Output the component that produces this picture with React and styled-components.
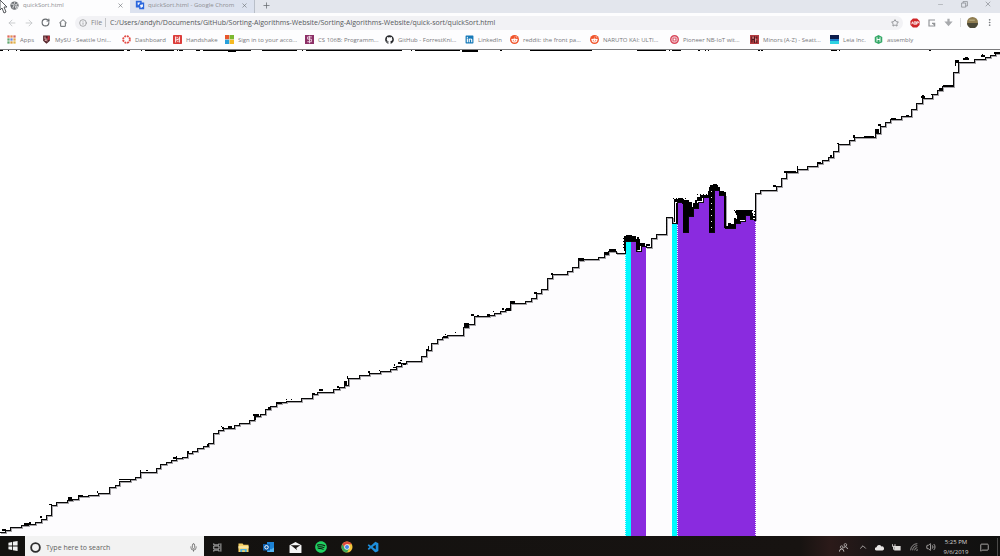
import React from "react";
import styled, { createGlobalStyle } from "styled-components";
import { ArrowLeft, ArrowRight, RotateCw, Info, Star, X, Plus, Minus, Mic, ChevronUp, Volume2, MessageSquare, EllipsisVertical } from "lucide-react";
import { FaGithub, FaLinkedin, FaRedditAlien, FaSpotify } from "react-icons/fa";
import { VscVscode } from "react-icons/vsc";

const GlobalStyle = createGlobalStyle`
  *, *::before, *::after { box-sizing: border-box; }
  body { margin: 0; background: #fff; font-family: "Open Sans", "Noto Sans", sans-serif; overflow: hidden; }
  button, input { font: inherit; color: inherit; border: 0; background: none; padding: 0; margin: 0; outline: none; }
  svg { display: block; flex: none; }
`;

const Screen = styled.div`
  display: flex;
  flex-direction: column;
  height: 100vh;
`;

const Pointer = styled.svg`
  position: absolute;
  left: 0;
  top: 0;
`;

/* Browser window */

const TabStrip = styled.div`
  display: flex;
  height: 13px;
  background: #e3e6ed;
`;

const Tab = styled.div`
  display: flex;
  align-items: center;
  gap: ${(p) => (p.$active ? 4 : 3)}px;
  width: ${(p) => (p.$active ? 131 : 124)}px;
  height: 13px;
  padding: 0 6px 3px ${(p) => (p.$active ? 10 : 4)}px;
  background: ${(p) => (p.$active ? "#fdfdfe" : "#dce2ef")};
  border-right: 1px solid ${(p) => (p.$active ? "#dce2ef" : "#b9bfc9")};
  font-size: 6px;
  color: #8e8f93;
`;

const TabTitle = styled.button`
  flex: 1;
  min-width: 0;
  height: 10px;
  line-height: 10px;
  white-space: nowrap;
  text-align: left;
`;

const IconButton = styled.button`
  display: flex;
  align-items: center;
  justify-content: center;
  width: ${(p) => p.$w || 17}px;
  height: ${(p) => p.$h || 19}px;
  color: ${(p) => p.$color || "#666a6e"};
`;

const WindowControls = styled.div`
  display: flex;
  margin-left: auto;
`;

const Toolbar = styled.div`
  display: flex;
  align-items: center;
  height: 19px;
  padding: 0 2px 0 3px;
  background: #fdfdfe;
`;

const AddressBar = styled.label`
  display: flex;
  align-items: center;
  flex: 1;
  height: 14px;
  margin: 0 3px 0 4px;
  padding-left: 4px;
  border-radius: 7px;
  background: #f2f2f5;
  font-size: 7px;
  color: #85878a;
`;

const Scheme = styled.span`
  margin-left: 4px;
  padding-right: 3px;
  border-right: 1px solid #c3c4c7;
  line-height: 9px;
`;

const Url = styled.input`
  flex: 1;
  min-width: 0;
  height: 14px;
  margin-left: 4px;
  color: #55585b;
`;

const Divider = styled.span`
  width: 1px;
  height: ${(p) => p.$h || 9}px;
  margin: 0 ${(p) => p.$gap || 3}px;
  background: ${(p) => p.$color || "#dadbdd"};
`;

const Bookmarks = styled.nav`
  display: flex;
  align-items: center;
  height: 18px;
  padding: 0 0 2px 7px;
  background: #fdfdfe;
  border-bottom: 1px solid #7b7b7d;
`;

const Bookmark = styled.a`
  display: flex;
  align-items: center;
  gap: 4px;
  flex: none;
  width: ${(p) => p.$w}px;
  font-size: 6px;
  line-height: 10px;
  white-space: nowrap;
  text-decoration: none;
  color: #77787b;
`;

/* Sorting chart */

const Chart = styled.svg`
  flex: 1;
  width: 100%;
  min-height: 0;
  background: #fff;
`;

/* Windows taskbar */

const Taskbar = styled.footer`
  display: flex;
  align-items: center;
  height: 20px;
  flex: none;
  background: linear-gradient(90deg, #12110f 0%, #171311 80%, #2b1a19 83%, #181516 88%, #10100f 100%);
  color: #d6d3d2;
`;

const Search = styled.label`
  display: flex;
  align-items: center;
  gap: 5px;
  width: 179px;
  height: 20px;
  padding: 2px 6px 0 5px;
  background: #f2f2f2;
  color: #5f5f5f;
  font-size: 7px;
`;

const SearchInput = styled.input`
  flex: 1;
  min-width: 0;
  height: 16px;
  &::placeholder { color: #5f5f5f; opacity: 1; }
`;

const Apps = styled.div`
  display: grid;
  grid-template-columns: repeat(7, 26px);
  padding-top: 2px;
`;

const Tray = styled.div`
  display: flex;
  align-items: center;
  margin-left: auto;
  padding-top: 2px;
`;

const Clock = styled.time`
  width: 34px;
  text-align: center;
  font-size: 6px;
  line-height: 10px;
`;

const Glyph = ({ size = 9, children }) => (
  <svg width={size} height={size} viewBox="0 0 24 24" fill="none">{children}</svg>
);

const Globe = () => (
  <Glyph>
    <circle cx="12" cy="12" r="11" fill="#6c6f73" />
    <path d="M3 8l6 1 2 4-3 2v5M13 3l-2 4 4 3 6-3M14 14l5-1 1 4-4 3z" stroke="#e6e7e9" strokeWidth="2.5" />
  </Glyph>
);
const BlueMark = () => (
  <Glyph size={10}>
    <path d="M2 2h14v4h6v16H10v-4H2z" fill="#2a66dd" />
    <path d="M6 6h7l-6 7zM12 12l7-2v6l-5 3z" fill="#f6f9ff" />
  </Glyph>
);
const AppsGrid = () => (
  <Glyph>
    {["#e26858", "#e58b50", "#d6635c", "#63a372", "#6b87d8", "#e0a44a", "#5fa66d", "#db9c3f", "#e0b44a"].map((c, i) => (
      <rect key={i} x={1 + (i % 3) * 8} y={1 + Math.floor(i / 3) * 8} width="6" height="6" fill={c} />
    ))}
  </Glyph>
);
const SeattleU = () => (
  <Glyph>
    <path d="M3 1h18v14l-9 8-9-8z" fill="#54242b" />
    <path d="M8 4v7h7M7 14l8 2" stroke="#e7b3b3" strokeWidth="2.5" />
    <path d="M15 3h5v10h-5z" fill="#c32f3d" />
  </Glyph>
);
const Canvas = () => (
  <Glyph>
    <circle cx="12" cy="12" r="9" stroke="#e24b45" strokeWidth="5" strokeDasharray="5 2.07" />
  </Glyph>
);
const Handshake = () => (
  <Glyph>
    <rect width="24" height="24" rx="2" fill="#dc3c3a" />
    <path d="M7 4v16M17 4v16M7 14l10-4M11 5v4M13 15v4" stroke="#fff" strokeWidth="2.5" />
  </Glyph>
);
const Microsoft = () => (
  <Glyph>
    <path d="M0 0h11.500v11.500H0z" fill="#e8562b" /><path d="M12.500 0H24v11.500H12.500z" fill="#7cb82f" />
    <path d="M0 12.500h11.500V24H0z" fill="#27a0dc" /><path d="M12.500 12.500H24V24H12.500z" fill="#f5b921" />
  </Glyph>
);
const Course = () => (
  <Glyph>
    <rect width="24" height="24" fill="#8c2f66" />
    <path d="M18 5H7v6h10v7H6M12 2v20" stroke="#f0d6e5" strokeWidth="2.5" />
  </Glyph>
);
const RedditDisc = styled.span`
  display: grid;
  place-items: center;
  flex: none;
  width: 9px;
  height: 9px;
  border-radius: 50%;
  background: #f0532a;
  color: #fff;
`;
const Reddit = () => <RedditDisc><FaRedditAlien size={7} /></RedditDisc>;
const Pioneer = () => (
  <Glyph>
    <circle cx="12" cy="12" r="10" stroke="#d8485b" strokeWidth="4" />
    <path d="M8 8h8v8H8z" stroke="#d8485b" strokeWidth="3" />
  </Glyph>
);
const Minors = () => (
  <Glyph>
    <rect width="24" height="24" fill="#b23a3f" />
    <path d="M5 4v16M5 12h6M12 3v18M18 4v6M18 14v7" stroke="#4d1c20" strokeWidth="3" />
    <path d="M8 5v5M15 9v9" stroke="#f0c3c3" strokeWidth="2" />
  </Glyph>
);
const Leia = () => (
  <Glyph>
    <path d="M0 0h24v12H0z" fill="#0c1c4c" /><path d="M0 11h24v6H0z" fill="#187dcc" /><path d="M0 16h24v8H0z" fill="#2ed2e2" />
  </Glyph>
);
const Assembly = () => (
  <Glyph>
    <path d="M12 0l10 5v14l-10 5-10-5V5z" fill="#35a968" />
    <path d="M8 6v12M16 6v12M8 12h8" stroke="#fff" strokeWidth="2.5" />
  </Glyph>
);

const bookmarks = [
  ["Apps", 35, <AppsGrid />],
  ["MySU - Seattle Uni...", 80, <SeattleU />],
  ["Dashboard", 51, <Canvas />],
  ["Handshake", 52, <Handshake />],
  ["Sign in to your acco...", 80, <Microsoft />],
  ["CS 106B: Programm...", 80, <Course />],
  ["GitHub - ForrestKni...", 80, <FaGithub size={9} color="#26282b" />],
  ["LinkedIn", 45, <FaLinkedin size={9} color="#1579b8" />],
  ["reddit: the front pa...", 80, <Reddit />],
  ["NARUTO KAI: ULTI...", 80, <Reddit />],
  ["Pioneer NB-IoT wit...", 80, <Pioneer />],
  ["Minors (A-Z) - Seatt...", 80, <Minors />],
  ["Leia Inc.", 44, <Leia />],
  ["assembly", 50, <Assembly />],
];

/* Each pair is the left edge of a bar and the height its top reaches. */
const bars = [
  [0, 532], [5, 530], [10, 527], [21, 525], [28, 524], [35, 522], [41, 519], [46, 515], [51, 505], [56, 502], [67, 500], [72, 499], [78, 496],
  [88, 495], [98, 493], [109, 487], [115, 485], [119, 481], [130, 479], [135, 477], [140, 472], [156, 468], [160, 464], [166, 462],
  [171, 460], [176, 458], [182, 457], [187, 453], [192, 451], [197, 448], [203, 446], [208, 443], [213, 433], [218, 430], [223, 428],
  [234, 425], [239, 423], [249, 420], [254, 416], [260, 414], [265, 409], [270, 406], [276, 403], [281, 402], [286, 401], [301, 398],
  [312, 394], [317, 392], [333, 389], [339, 387], [344, 385], [348, 378], [359, 375], [369, 373], [380, 371], [390, 369], [396, 366],
  [401, 363], [406, 361], [421, 356], [426, 350], [431, 343], [437, 339], [442, 337], [447, 335], [463, 327], [468, 324], [474, 316],
  [489, 315], [494, 313], [500, 311], [505, 309], [510, 303], [525, 301], [531, 298], [536, 293], [541, 289], [547, 278], [552, 274],
  [567, 271], [572, 267], [578, 260], [583, 259], [598, 257], [604, 254], [608, 251], [616, 253], [625, 241], [631, 241], [636, 251],
  [641, 246], [646, 247], [651, 238], [656, 234], [666, 217], [672, 223], [677, 202], [683, 232], [688, 216], [693, 208], [698, 202],
  [703, 197], [709, 232], [714, 190], [719, 195], [725, 228], [735, 223], [740, 221], [745, 215], [750, 219], [755, 193], [760, 190],
  [776, 186], [781, 178], [786, 172], [797, 169], [807, 166], [817, 163], [822, 160], [828, 157], [833, 151], [838, 144], [849, 140],
  [854, 137], [875, 133], [880, 126], [885, 122], [890, 119], [901, 116], [911, 109], [916, 103], [922, 98], [932, 94], [937, 90],
  [942, 86], [953, 72], [958, 62], [974, 59], [985, 57], [990, 55], [995, 53],
];

const stairs = bars.map(([x, y], i) => (i ? `H${x}V${y}` : `M${x} ${y}`)).join("") + "H1000";

/* Leftover pixels around the bar tops: x, y, width, height. */
const residue = [
  [2, 529, 4, 2], [24, 523, 6, 2], [29, 522, 2, 2], [40, 516, 2, 2], [49, 504, 3, 1], [68, 497, 4, 3], [78, 495, 5, 2], [119, 479, 11, 1],
  [97, 491, 1, 2], [140, 470, 1, 2], [146, 470, 2, 1], [173, 457, 4, 2], [176, 456, 1, 3], [187, 451, 2, 2], [207, 444, 2, 2], [222, 427, 2, 2],
  [228, 426, 4, 2], [221, 426, 1, 1], [253, 414, 6, 2], [254, 417, 2, 3], [268, 407, 2, 2], [276, 402, 5, 2], [286, 399, 1, 1], [291, 399, 1, 1],
  [319, 389, 4, 2], [312, 393, 3, 2], [337, 386, 2, 2], [344, 381, 3, 4], [347, 376, 1, 3], [368, 371, 2, 2], [379, 370, 1, 1],
  [393, 367, 3, 1], [394, 364, 1, 2], [398, 362, 3, 2], [400, 360, 2, 1], [403, 363, 3, 2], [426, 349, 3, 2], [428, 346, 1, 3], [443, 336, 4, 2],
  [445, 334, 1, 1], [455, 332, 1, 1], [464, 323, 5, 4], [471, 314, 3, 2], [477, 315, 2, 1], [487, 314, 3, 2], [493, 311, 1, 1], [502, 308, 2, 2],
  [506, 308, 5, 3], [510, 301, 5, 3], [534, 292, 3, 2], [551, 273, 2, 2], [578, 258, 6, 2], [604, 252, 5, 2], [609, 249, 7, 2],
  [624, 236, 12, 5], [626, 235, 6, 2], [637, 237, 2, 2], [624, 240, 1, 11], [636, 239, 4, 11], [640, 243, 5, 3], [646, 244, 4, 2],
  [674, 199, 10, 3], [678, 198, 4, 2], [674, 200, 1, 22], [676, 203, 1, 20], [682, 200, 2, 4], [683, 200, 5, 32], [688, 202, 4, 14],
  [686, 200, 3, 5], [692, 207, 1, 9], [693, 203, 5, 5], [695, 200, 2, 3], [697, 197, 5, 4], [700, 195, 8, 3], [708, 191, 1, 6],
  [709, 187, 5, 45], [710, 185, 8, 5], [713, 184, 4, 2], [718, 187, 2, 3], [719, 191, 5, 4], [724, 192, 2, 36], [725, 226, 9, 2],
  [728, 223, 3, 4], [731, 224, 3, 2], [734, 218, 2, 10], [736, 210, 16, 5], [735, 211, 5, 2], [737, 214, 8, 6], [736, 219, 4, 4],
  [750, 213, 3, 6], [753, 216, 2, 2], [755, 193, 1, 28], [773, 185, 3, 2], [784, 171, 12, 2], [797, 166, 1, 4], [817, 162, 4, 2],
  [830, 155, 2, 2], [837, 143, 2, 1], [853, 135, 2, 3], [864, 136, 10, 2], [875, 129, 4, 4], [878, 124, 3, 2], [891, 118, 5, 2],
  [906, 115, 3, 1], [921, 96, 4, 2], [922, 95, 2, 1], [931, 94, 2, 1], [939, 88, 4, 2], [943, 85, 10, 2], [955, 60, 4, 3], [955, 63, 1, 3],
  [963, 58, 6, 2], [965, 57, 3, 2], [981, 55, 4, 2], [982, 54, 1, 1], [994, 52, 6, 2],
  [0, 50, 3, 1], [8, 50, 1, 1], [16, 50, 1, 1], [20, 50, 104, 1], [127, 50, 3, 1], [141, 50, 1, 1], [145, 50, 29, 1], [177, 50, 1, 1],
  [179, 50, 4, 1], [196, 50, 4, 1], [203, 50, 48, 1], [228, 50, 8, 2], [262, 50, 35, 1], [302, 50, 1, 1], [306, 50, 96, 1], [411, 50, 1, 1],
  [415, 50, 45, 1], [462, 50, 16, 2], [500, 50, 2, 1], [530, 50, 62, 1], [637, 50, 29, 1], [669, 50, 1, 1], [672, 50, 9, 1], [698, 50, 2, 1],
  [705, 50, 1, 1], [708, 50, 1, 1], [758, 50, 2, 1], [761, 50, 2, 1], [831, 50, 6, 1], [839, 50, 1, 1], [929, 50, 2, 1],
];

const dottedEdges = [[625, 241], [677, 223], [755, 221]];

function SortChart() {
  return (
    <Chart viewBox="0 50 1000 486" preserveAspectRatio="none" shapeRendering="crispEdges" role="img" aria-label="Quick sort bars">
      <path d={`${stairs}V536H0Z`} fill="#fdfcfe" />
      <path d={stairs} fill="none" stroke="#a5a3a7" transform="translate(1 1)" />
      <path d="M631 536V241H636V251H641V246H646V536Z" fill="#8a2bdf" />
      <path d="M677 536V202H683V232H688V216H693V208H698V202H703V197H709V232H714V190H719V195H725V228H735V223H740V221H745V215H750V219H755V536Z" fill="#8a2bdf" />
      <path d="M625 241h6v295h-6zM672 223h5v313h-5z" fill="#00f9ff" />
      {dottedEdges.map(([x, y]) => (
        <path key={x} d={`M${x}.5 ${y}V536`} stroke={x === 755 ? "#8a2bdf" : "#eef4ff"} strokeDasharray="1 1" />
      ))}
      <path d={stairs} fill="none" stroke="#080808" />
      <path d={residue.map(([x, y, w, h]) => `M${x} ${y}h${w}v${h}h${-w}z`).join("")} fill="#000" />
      <path d="M697 194.500H709M673 198.500H686M623 237.500V250M734 210.500H754M754.500 211V221M666.500 217V234" stroke="#000" strokeDasharray="1 2" />
      <path d="M711.500 191V230" stroke="#fff" strokeDasharray="1 5" />
    </Chart>
  );
}

function TaskApp({ label, children }) {
  return <IconButton $w={26} $h={18} aria-label={label}>{children}</IconButton>;
}

export default function App() {
  return (
    <Screen>
      <GlobalStyle />
      <header>
        <TabStrip>
          <Tab $active>
            <Globe />
            <TabTitle>quickSort.html</TabTitle>
            <IconButton $w={7} $h={9} aria-label="Close tab"><X size={7} /></IconButton>
          </Tab>
          <Tab>
            <BlueMark />
            <TabTitle>quickSort.html - Google Chrom</TabTitle>
            <IconButton $w={7} $h={9} aria-label="Close tab"><X size={7} /></IconButton>
          </Tab>
          <IconButton $w={22} $h={11} aria-label="New tab"><Plus size={9} /></IconButton>
          <WindowControls>
            <IconButton $w={24} $h={8} $color="#999ca2" aria-label="Minimize"><Minus size={7} /></IconButton>
            <IconButton $w={24} $h={8} $color="#85888e" aria-label="Restore">
              <Glyph size={7}><path d="M2 7h14v14H2zM7 7V2h15v15h-6" stroke="currentColor" strokeWidth="2.5" /></Glyph>
            </IconButton>
            <IconButton $w={24} $h={8} $color="#85888e" aria-label="Close"><X size={8} /></IconButton>
          </WindowControls>
        </TabStrip>
        <Toolbar>
          <IconButton $color="#c2c4c7" aria-label="Back"><ArrowLeft size={10} /></IconButton>
          <IconButton $color="#c2c4c7" aria-label="Forward"><ArrowRight size={10} /></IconButton>
          <IconButton aria-label="Reload"><RotateCw size={9} strokeWidth={3} /></IconButton>
          <IconButton aria-label="Home">
            <Glyph size={8}><path d="M1 12L12 2l11 10M5 10v12h14V10" stroke="currentColor" strokeWidth="3" /></Glyph>
          </IconButton>
          <AddressBar>
            <Info size={8} />
            <Scheme>File</Scheme>
            <Url aria-label="Address" readOnly value="C:/Users/andyh/Documents/GitHub/Sorting-Algorithms-Website/Sorting-Algorithms-Website/quick-sort/quickSort.html" />
            <IconButton $h={14} aria-label="Bookmark this page"><Star size={8} /></IconButton>
          </AddressBar>
          <IconButton aria-label="Ad blocker">
            <Glyph size={10}>
              <path d="M7 1h10l6 6v10l-6 6H7l-6-6V7z" fill="#cf2528" />
              <path d="M4 15l2-6 2 6M10 15V9h4v6zM16 16V9h4v3h-4" stroke="#fff" strokeWidth="2" />
            </Glyph>
          </IconButton>
          <IconButton $color="#929497" aria-label="Extension">
            <Glyph size={8}><path d="M21 3H3v18h17v-8h-8" stroke="currentColor" strokeWidth="3.5" /><path d="M12 13l9 9v-9z" fill="currentColor" /></Glyph>
          </IconButton>
          <IconButton $color="#a8aaad" aria-label="Download">
            <Glyph size={9}><path d="M9 2h6v7h8L12 22 1 9h8z" fill="currentColor" /></Glyph>
          </IconButton>
          <Divider />
          <IconButton aria-label="Profile">
            <Glyph size={11}><circle cx="12" cy="12" r="12" fill="#8f7d51" /><path d="M0 13h24a12 12 0 0 1-24 0z" fill="#4b4938" /><path d="M5 7h12" stroke="#b5a77c" strokeWidth="3" /></Glyph>
          </IconButton>
          <IconButton aria-label="Menu"><EllipsisVertical size={9} /></IconButton>
        </Toolbar>
        <Bookmarks aria-label="Bookmarks">
          {bookmarks.map(([name, w, icon]) => (
            <Bookmark key={name} href="#" $w={w}>{icon}{name}</Bookmark>
          ))}
        </Bookmarks>
      </header>
      <SortChart />
      <Taskbar>
        <IconButton $w={25} $h={20} aria-label="Start">
          <Glyph size={10}><path d="M1 4l9-1.500V11H1zM12 2l11-2v11H12zM1 13h9v8.500L1 20zM12 13h11v11l-11-2z" fill="#f1f1f1" /></Glyph>
        </IconButton>
        <Search>
          <Glyph size={11}><circle cx="12" cy="12" r="9.500" stroke="#2c2c2c" strokeWidth="4" /></Glyph>
          <SearchInput placeholder="Type here to search" aria-label="Search" />
          <Mic size={9} />
        </Search>
        <Apps>
          <TaskApp label="Task view">
            <Glyph size={9}><path d="M2 1v4h14V1M2 23v-4h14v4M2 8h14v8H2zM21 1v22" stroke="#b9b9b9" strokeWidth="2.5" /></Glyph>
          </TaskApp>
          <TaskApp label="File Explorer">
            <Glyph size={11}><path d="M1 3h9l2 3h11v16H1z" fill="#f3ce65" /><path d="M1 9h22v5H1z" fill="#fbe7a2" /><path d="M5 22v-7h14v7h-4v-4H9v4z" fill="#4eb2df" /></Glyph>
          </TaskApp>
          <TaskApp label="Outlook">
            <Glyph size={12}><path d="M8 2h14v20H8z" fill="#1d83d5" /><path d="M10 13l6 4 6-4v9H9z" fill="#55b5f1" /><path d="M0 6h14v13H0z" fill="#0e5eac" /><circle cx="7" cy="12.500" r="3.500" stroke="#fff" strokeWidth="2" /></Glyph>
          </TaskApp>
          <TaskApp label="Mail">
            <Glyph size={13}><path d="M1 8l11-6 11 6v14H1z" fill="#f4f4f4" /><path d="M3 8h18l-9 6z" fill="#171412" /><path d="M8 11l7 6-2-5z" fill="#171412" /></Glyph>
          </TaskApp>
          <TaskApp label="Spotify"><FaSpotify size={12} color="#1fd161" /></TaskApp>
          <TaskApp label="Chrome">
            <Glyph size={12}>
              <circle cx="12" cy="12" r="11" fill="#f4c63d" />
              <path d="M2.500 6.500A11 11 0 0 1 21.500 6.500H12L7 14z" fill="#df4b3d" />
              <path d="M2.500 6.500A11 11 0 0 0 12 23l4.500-8H8z" fill="#3ba75a" />
              <circle cx="12" cy="12" r="5.500" fill="#f5f5f5" /><circle cx="12" cy="12" r="4" fill="#4685e8" />
            </Glyph>
          </TaskApp>
          <TaskApp label="Visual Studio Code"><VscVscode size={13} color="#1e8fdc" /></TaskApp>
        </Apps>
        <Tray>
          <IconButton $w={22} $h={18} $color="#c4c0bf" aria-label="People">
            <Glyph size={9}><circle cx="7" cy="11" r="3.500" stroke="currentColor" strokeWidth="2" /><path d="M1 23q0-7 6-7t6 7" stroke="currentColor" strokeWidth="2.500" /><circle cx="17" cy="5" r="3.500" stroke="currentColor" strokeWidth="2" /><path d="M12 14q1-4 5-4t6 6" stroke="currentColor" strokeWidth="2.500" /></Glyph>
          </IconButton>
          <IconButton $h={18} $color="#c4c0bf" aria-label="Show hidden icons"><ChevronUp size={10} /></IconButton>
          <IconButton $h={18} $color="#e7e5e4" aria-label="OneDrive">
            <Glyph size={9}><path d="M4 20a4 4 0 0 1 0-9 7 7 0 0 1 13-2 5.500 5.500 0 0 1 3 11z" fill="currentColor" /></Glyph>
          </IconButton>
          <IconButton $h={18} $color="#dedbda" aria-label="Battery">
            <Glyph size={9}><path d="M6 8h17v12H6z" fill="currentColor" /><path d="M1 3v6h7V3M4 9v8h3" stroke="currentColor" strokeWidth="2.500" /></Glyph>
          </IconButton>
          <IconButton $h={18} $color="#a8a6a5" aria-label="Network">
            <Glyph size={8}><path d="M2 22A20 20 0 0 1 22 2M8 22A14 14 0 0 1 22 8M14 22a8 8 0 0 1 8-8M19 22h3v-3" stroke="currentColor" strokeWidth="2.500" /></Glyph>
          </IconButton>
          <IconButton $h={18} $color="#c4c2c1" aria-label="Volume"><Volume2 size={10} /></IconButton>
          <Clock>5:25 PM<br />9/6/2019</Clock>
          <IconButton $w={22} $h={18} $color="#d6d3d2" aria-label="Notifications"><MessageSquare size={9} /></IconButton>
          <Divider $h={18} $gap={2} $color="#4a4948" />
        </Tray>
      </Taskbar>
      <Pointer width="8" height="14" viewBox="0 0 8 14" aria-hidden="true">
        <path d="M0 0L7 7H4L6 12L4 13L2 8L0 10Z" fill="#fff" stroke="#55585c" />
      </Pointer>
    </Screen>
  );
}
